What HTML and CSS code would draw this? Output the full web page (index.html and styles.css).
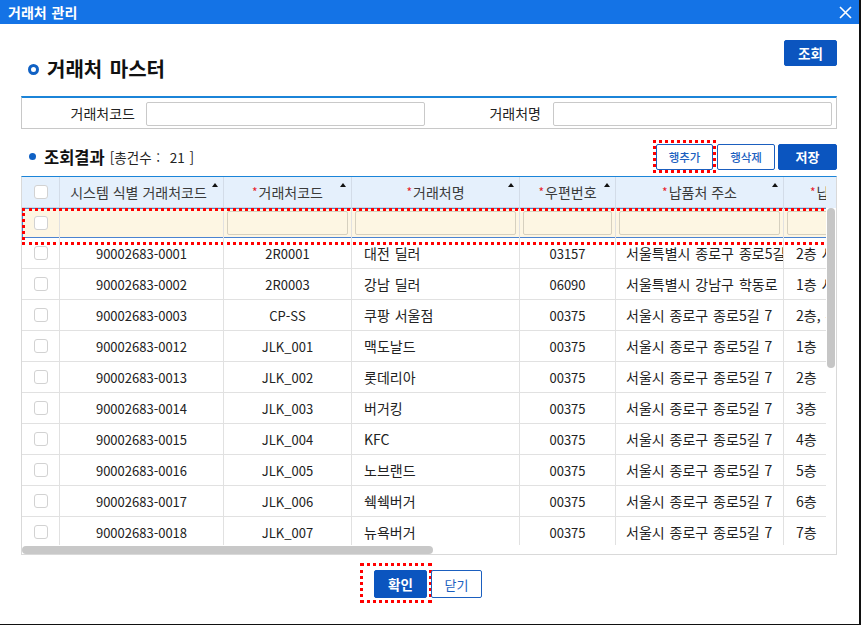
FILE: index.html
```html
<!DOCTYPE html>
<html lang="ko">
<head>
  <meta charset="UTF-8">
  <title>거래처 관리</title>
  <link rel="stylesheet" href="styles.css">
</head>
<body>
  <div class="dialog">
    <div class="titlebar">
      <span>거래처 관리</span>
      <svg class="close" width="13" height="13" viewBox="0 0 13 13">
        <path d="M1 1 L12 12 M12 1 L1 12" stroke="#fff" stroke-width="1.6" fill="none"/>
      </svg>
    </div>

    <div class="content">
      <div class="page-head">
        <h1 class="page-title"><span class="ring"></span>거래처 마스터</h1>
        <button class="btn btn-primary btn-search">조회</button>
      </div>

      <div class="search">
        <label class="search-label">거래처코드</label>
        <input type="text" class="search-input">
        <label class="search-label">거래처명</label>
        <input type="text" class="search-input">
      </div>

      <div class="result-head">
        <div class="result-title">
          <span class="dot"></span>
          <strong>조회결과</strong>
          <span class="count">[총건수 :&nbsp; 21 ]</span>
        </div>
        <div class="result-actions">
          <span class="mark mark-add"><button class="btn btn-line">행추가</button></span>
          <button class="btn btn-line btn-del">행삭제</button>
          <button class="btn btn-primary btn-save">저장</button>
        </div>
      </div>

      <div class="grid">
        <div class="grid-head">
          <div class="view">
            <div class="row head-row">
              <div class="cell c1"><span class="chk"></span></div>
              <div class="cell c2">시스템 식별 거래처코드<i class="sort"></i></div>
              <div class="cell c3"><em>*</em>거래처코드<i class="sort"></i></div>
              <div class="cell c4"><em>*</em>거래처명<i class="sort"></i></div>
              <div class="cell c5"><em>*</em>우편번호<i class="sort"></i></div>
              <div class="cell c6"><em>*</em>납품처 주소<i class="sort"></i></div>
              <div class="cell c7"><em>*</em>납품처 상세주소<i class="sort"></i></div>
            </div>
          </div>
        </div>

        <div class="grid-main">
          <div class="view grid-body">
            <div class="row filter-row">
              <div class="cell c1"><span class="chk"></span></div>
              <div class="cell c2"></div>
              <div class="cell c3"><span class="finput"></span></div>
              <div class="cell c4"><span class="finput"></span></div>
              <div class="cell c5"><span class="finput"></span></div>
              <div class="cell c6"><span class="finput"></span></div>
              <div class="cell c7"><span class="finput"></span></div>
            </div>
            <div class="row">
              <div class="cell c1"><span class="chk"></span></div>
              <div class="cell c2">90002683-0001</div>
              <div class="cell c3">2R0001</div>
              <div class="cell c4 left">대전 딜러</div>
              <div class="cell c5">03157</div>
              <div class="cell c6 left">서울특별시 종로구 종로5길 7</div>
              <div class="cell c7 left">2층 서울특별시</div>
            </div>
            <div class="row">
              <div class="cell c1"><span class="chk"></span></div>
              <div class="cell c2">90002683-0002</div>
              <div class="cell c3">2R0003</div>
              <div class="cell c4 left">강남 딜러</div>
              <div class="cell c5">06090</div>
              <div class="cell c6 left">서울특별시 강남구 학동로 1</div>
              <div class="cell c7 left">1층 서울특별시</div>
            </div>
            <div class="row">
              <div class="cell c1"><span class="chk"></span></div>
              <div class="cell c2">90002683-0003</div>
              <div class="cell c3">CP-SS</div>
              <div class="cell c4 left">쿠팡 서울점</div>
              <div class="cell c5">00375</div>
              <div class="cell c6 left">서울시 종로구 종로5길 7</div>
              <div class="cell c7 left">2층, 쿠팡</div>
            </div>
            <div class="row">
              <div class="cell c1"><span class="chk"></span></div>
              <div class="cell c2">90002683-0012</div>
              <div class="cell c3">JLK_001</div>
              <div class="cell c4 left">맥도날드</div>
              <div class="cell c5">00375</div>
              <div class="cell c6 left">서울시 종로구 종로5길 7</div>
              <div class="cell c7 left">1층</div>
            </div>
            <div class="row">
              <div class="cell c1"><span class="chk"></span></div>
              <div class="cell c2">90002683-0013</div>
              <div class="cell c3">JLK_002</div>
              <div class="cell c4 left">롯데리아</div>
              <div class="cell c5">00375</div>
              <div class="cell c6 left">서울시 종로구 종로5길 7</div>
              <div class="cell c7 left">2층</div>
            </div>
            <div class="row">
              <div class="cell c1"><span class="chk"></span></div>
              <div class="cell c2">90002683-0014</div>
              <div class="cell c3">JLK_003</div>
              <div class="cell c4 left">버거킹</div>
              <div class="cell c5">00375</div>
              <div class="cell c6 left">서울시 종로구 종로5길 7</div>
              <div class="cell c7 left">3층</div>
            </div>
            <div class="row">
              <div class="cell c1"><span class="chk"></span></div>
              <div class="cell c2">90002683-0015</div>
              <div class="cell c3">JLK_004</div>
              <div class="cell c4 left">KFC</div>
              <div class="cell c5">00375</div>
              <div class="cell c6 left">서울시 종로구 종로5길 7</div>
              <div class="cell c7 left">4층</div>
            </div>
            <div class="row">
              <div class="cell c1"><span class="chk"></span></div>
              <div class="cell c2">90002683-0016</div>
              <div class="cell c3">JLK_005</div>
              <div class="cell c4 left">노브랜드</div>
              <div class="cell c5">00375</div>
              <div class="cell c6 left">서울시 종로구 종로5길 7</div>
              <div class="cell c7 left">5층</div>
            </div>
            <div class="row">
              <div class="cell c1"><span class="chk"></span></div>
              <div class="cell c2">90002683-0017</div>
              <div class="cell c3">JLK_006</div>
              <div class="cell c4 left">쉑쉑버거</div>
              <div class="cell c5">00375</div>
              <div class="cell c6 left">서울시 종로구 종로5길 7</div>
              <div class="cell c7 left">6층</div>
            </div>
            <div class="row">
              <div class="cell c1"><span class="chk"></span></div>
              <div class="cell c2">90002683-0018</div>
              <div class="cell c3">JLK_007</div>
              <div class="cell c4 left">뉴욕버거</div>
              <div class="cell c5">00375</div>
              <div class="cell c6 left">서울시 종로구 종로5길 7</div>
              <div class="cell c7 left">7층</div>
            </div>
          </div>
          <div class="vscroll"><div class="vthumb"></div></div>
        </div>

        <div class="hscroll"><div class="hthumb"></div></div>
      </div>

      <div class="footer">
        <span class="mark mark-ok"><button class="btn btn-primary btn-ok">확인</button></span>
        <button class="btn btn-line btn-close">닫기</button>
      </div>
    </div>
  </div>
</body>
</html>
```

FILE: styles.css
```css
* {
  box-sizing: border-box;
}
body {
  margin: 0;
  background: #fff;
  font-family: "Noto Sans CJK KR", "Noto Sans", sans-serif;
  color: #222;
}
.dialog {
  width: 861px;
  height: 625px;
  border-right: 2px solid #111;
  border-bottom: 1px solid #111;
  background: #fff;
}
.titlebar {
  height: 24px;
  background: #1473e6;
  color: #fff;
  font-size: 14px;
  font-weight: bold;
  word-spacing: 1px;
  padding: 0 7px 0 8px;
  display: flex;
  align-items: center;
  justify-content: space-between;
}
.close {
  margin-top: 1px;
}
.content {
  padding: 0 22px 0 21px;
}

/* buttons */
.btn {
  font-family: inherit;
  height: 26px;
  border-radius: 2px;
  cursor: pointer;
  padding: 0;
}
.btn-primary {
  background: #0b55bf;
  border: 1px solid #0b55bf;
  color: #fff;
  font-weight: bold;
  font-size: 13.5px;
}
.btn-line {
  background: #fff;
  border: 1px solid #1b5fbf;
  color: #1b5fbf;
  font-size: 11.5px;
  font-weight: 500;
}
.mark {
  display: inline-flex;
  border: 3px dotted #f00;
}

/* page heading */
.page-head {
  margin-top: 16px;
  height: 56px;
  display: flex;
  justify-content: space-between;
  align-items: flex-start;
}
.page-title {
  margin: 15px 0 0;
  padding-left: 7px;
  font-size: 20px;
  line-height: 28px;
  font-weight: bold;
  word-spacing: 2px;
  color: #111;
  display: flex;
  align-items: center;
}
.ring {
  width: 11px;
  height: 11px;
  border: 3px solid #1061c4;
  border-radius: 50%;
  margin-right: 8px;
}
.btn-search {
  width: 53px;
}

/* search form */
.search {
  height: 33px;
  border: 1px solid #c8c8c8;
  border-top: 2px solid #1b84d8;
  display: flex;
  align-items: center;
}
.search-label {
  font-size: 14px;
  color: #222;
  text-align: right;
}
.search-label:nth-of-type(1) {
  width: 113px;
  margin-right: 11px;
}
.search-label:nth-of-type(2) {
  width: 116px;
  margin-right: 12px;
}
.search-input {
  width: 279px;
  height: 24px;
  border: 1px solid #c9c9c9;
  border-radius: 2px;
  background: #fff;
  margin-top: 1px;
}

/* result head */
.result-head {
  margin-top: 11px;
  height: 33px;
  display: flex;
  justify-content: space-between;
  align-items: center;
}
.result-title {
  display: flex;
  align-items: center;
  padding-left: 8px;
}
.dot {
  width: 7px;
  height: 7px;
  border-radius: 50%;
  background: #1061c4;
  margin-right: 8px;
}
.result-title strong {
  font-size: 16.5px;
  color: #111;
  margin-right: 5px;
}
.count {
  font-size: 13.5px;
  color: #222;
  white-space: pre;
  word-spacing: 1px;
}
.result-actions {
  display: flex;
  align-items: center;
}
.mark-add {
  padding-top: 1px;
}
.mark-add .btn {
  width: 57px;
}
.btn-del {
  width: 58px;
  margin-left: 1px;
}
.btn-save {
  width: 59px;
  margin-left: 3px;
  font-size: 13px;
}

/* grid */
.grid {
  margin-top: 3px;
  border: 1px solid #d9d9d9;
  border-top: 1px solid #1b84d8;
}
.view {
  width: 804px;
  overflow: hidden;
}
.grid-head {
  background: #e5f0fc;
}
.row {
  display: flex;
  height: 31px;
  border-bottom: 1px solid #e1e1e1;
  width: max-content;
}
.head-row {
  border-bottom-color: #cdd6e2;
  color: #3a3a3a;
}
.cell {
  flex: none;
  border-right: 1px solid #e1e1e1;
  display: flex;
  align-items: center;
  justify-content: center;
  white-space: nowrap;
  overflow: hidden;
  font-size: 13px;
  position: relative;
}
.head-row .cell {
  font-size: 14px;
  border-right-color: #d3dce8;
}
.cell.left {
  justify-content: flex-start;
  padding-left: 12px;
  font-size: 14px;
  word-spacing: 1px;
}
.c6.left {
  padding-left: 10px;
}
.c1 { width: 38px; }
.c2 { width: 164px; }
.c3 { width: 128px; }
.c4 { width: 168px; }
.c5 { width: 96px; }
.c6 { width: 168px; }
.c7 { width: 160px; }
.head-row .c2 {
  padding-right: 6px;
}
.head-row .c7 {
  justify-content: flex-start;
  padding-left: 26px;
}
.cell em {
  font-style: normal;
  color: #e8202a;
  font-size: 12px;
  margin-right: 1px;
  margin-top: -2px;
}
.sort {
  position: absolute;
  top: 6px;
  right: 5px;
  border-left: 3px solid transparent;
  border-right: 3px solid transparent;
  border-bottom: 4px solid #111;
}
.chk {
  width: 14px;
  height: 14px;
  border: 1px solid #d2d2d2;
  border-radius: 3px;
  background: #fff;
}
.grid-main {
  display: flex;
}
.grid-body {
  height: 337px;
}
.filter-row {
  background: #fdf6e3;
  box-shadow: inset 0 0 0 1px #4b83d1;
  position: relative;
  border-bottom: none;
  height: 30px;
}
.filter-row::after {
  content: "";
  position: absolute;
  left: 0;
  top: 0;
  width: 803px;
  height: 31px;
  border: 3px dotted #f00;
  pointer-events: none;
}
.finput {
  display: block;
  width: 100%;
  height: 24px;
  margin: 0 3px;
  border: 1px solid #d6d0bf;
  border-radius: 2px;
  background: #fdf6e3;
}
.vscroll {
  width: 10px;
  padding-left: 1px;
}
.vthumb {
  width: 8px;
  height: 160px;
  border-radius: 4px;
  background: #c6c6c6;
}
.hscroll {
  height: 9px;
  padding-top: 1px;
}
.hthumb {
  width: 411px;
  height: 8px;
  border-radius: 4px;
  background: #c8c8c8;
}

/* footer */
.footer {
  margin-top: 8px;
  display: flex;
  justify-content: center;
  padding-right: 16px;
}
.mark-ok {
  padding: 4px 2px 2px 11px;
}
.btn-ok {
  width: 53px;
  height: 28px;
}
.btn-close {
  width: 51px;
  height: 28px;
  margin-top: 7px;
  margin-left: -1px;
  font-size: 13px;
  font-weight: normal;
}
```
